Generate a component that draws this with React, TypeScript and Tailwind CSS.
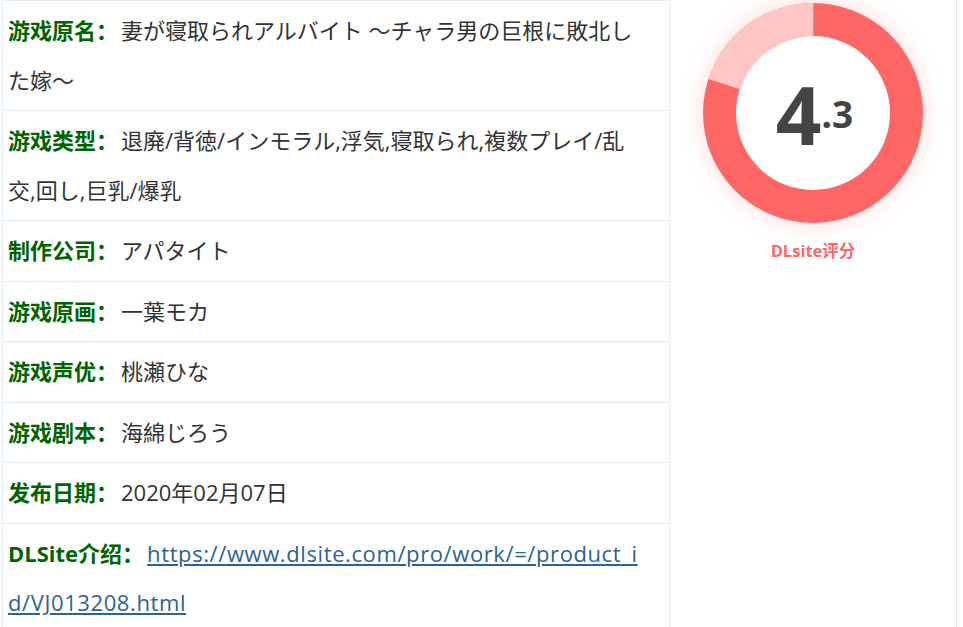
import React from "react";

const rows: { label: string; value: string; link?: boolean }[] = [
  { label: "游戏原名：", value: "妻が寝取られアルバイト ～チャラ男の巨根に敗北した嫁～" },
  { label: "游戏类型：", value: "退廃/背徳/インモラル,浮気,寝取られ,複数プレイ/乱交,回し,巨乳/爆乳" },
  { label: "制作公司：", value: "アパタイト" },
  { label: "游戏原画：", value: "一葉モカ" },
  { label: "游戏声优：", value: "桃瀬ひな" },
  { label: "游戏剧本：", value: "海綿じろう" },
  { label: "发布日期：", value: "2020年02月07日" },
  {
    label: "DLSite介绍：",
    value: "https://www.dlsite.com/pro/work/=/product_id/VJ013208.html",
    link: true,
  },
];

const Donut: React.FC = () => {
  const r = 93.5;
  const c = 2 * Math.PI * r;
  const pink = c * 0.2;
  return (
    <div className="relative w-[220px] h-[220px] rounded-full shadow-[0_0_22px_rgba(255,102,102,0.25)]">
      <svg width="220" height="220" viewBox="0 0 220 220" className="absolute inset-0">
        <circle cx="110" cy="110" r={r} fill="none" stroke="#ff6666" strokeWidth="33" />
        <circle
          cx="110"
          cy="110"
          r={r}
          fill="none"
          stroke="#ffc6c6"
          strokeWidth="33"
          strokeDasharray={`${pink} ${c}`}
          transform="rotate(-162 110 110)"
        />
      </svg>
      <div
        className="absolute inset-0 flex items-center justify-center pl-[3px] pt-[2px]"
        style={{ fontFamily: '"Noto Sans", sans-serif' }}
      >
        <span className="text-[80px] font-bold leading-none text-[#444]">4</span>
        <span className="text-[37px] font-bold leading-none text-[#444] -mt-[2px]">.3</span>
      </div>
    </div>
  );
};

const App: React.FC = () => {
  return (
    <div
      className="w-[963px] h-[627px] overflow-hidden bg-white flex"
      style={{ fontFamily: '"Open Sans", "Noto Sans CJK SC", sans-serif' }}
    >
      <div className="w-[2px] shrink-0" />
      <table className="w-[668px] shrink-0 border-collapse self-start">
        <tbody>
          {rows.map((row) => (
            <tr key={row.label}>
              <td className="border border-[#e3edf5] pl-[5px] pr-[24px] py-[5px] text-[22px] leading-[49.5px] text-[#333] align-top">
                <span className="font-bold text-[#006400] mr-[3px]">{row.label}</span>
                {row.link ? (
                  <a href="#" className="text-[#2a6496] underline break-all tracking-[0.6px]">
                    {row.value}
                  </a>
                ) : (
                  <span>{row.value}</span>
                )}
              </td>
            </tr>
          ))}
        </tbody>
      </table>
      <div className="w-[287px] shrink-0 border-r border-[#dde8f3] flex flex-col items-center pt-[3px]">
        <Donut />
        <div className="mt-[16px] text-[16.5px] font-bold text-[#ff6666]">DLsite评分</div>
      </div>
    </div>
  );
};

export default App;
